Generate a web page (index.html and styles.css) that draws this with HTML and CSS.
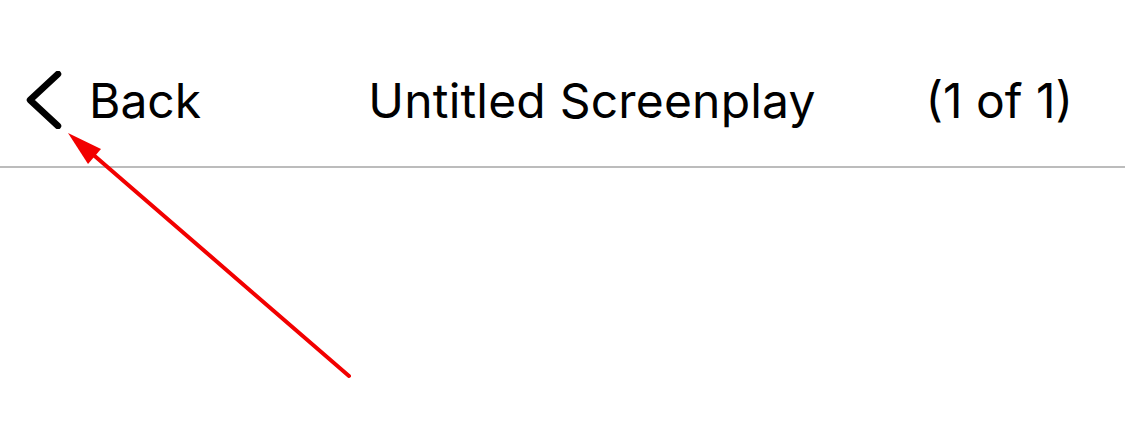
FILE: index.html
```html
<!DOCTYPE html>
<html lang="en">
<head>
    <meta charset="UTF-8">
    <title>Untitled Screenplay</title>
    <link rel="stylesheet" href="styles.css">
</head>
<body>

<div class="screen">
    <div class="nav-bar">
        <a class="back-btn" href="#">
            <svg class="chevron" width="40" height="58" viewBox="0 0 40 58">
                <path d="M33 3 L5 29 L33 55" fill="none" stroke="#000" stroke-width="6.5" stroke-linecap="round" stroke-linejoin="round"/>
            </svg>
            <span>Back</span>
        </a>
        <div class="nav-title">Untitled Screenplay</div>
        <div class="nav-count">(1 of 1)</div>
    </div>

    <!-- annotation arrow -->
    <svg class="annotation" width="1125" height="438" viewBox="0 0 1125 438">
        <line x1="349" y1="376" x2="82" y2="145" stroke="#f20000" stroke-width="4" stroke-linecap="round"/>
        <polygon points="68,133 101,149 88,164" fill="#f20000"/>
    </svg>
</div>

</body>
</html>
```

FILE: styles.css
```css
body {
    margin: 0;
    background: #fff;
    font-family: Inter, "Liberation Sans", Arial, sans-serif;
    color: #000;
}

.screen {
    position: relative;
    width: 1125px;
    height: 438px;
    overflow: hidden;
}

.nav-bar {
    display: flex;
    align-items: center;
    height: 168px;
    padding: 34px 52px 0 25px;
    border-bottom: 2px solid #bcbcbc;
    box-sizing: border-box;
    white-space: nowrap;
    font-size: 48px;
}

.back-btn {
    display: flex;
    align-items: center;
    gap: 24px;
    color: #000;
    text-decoration: none;
    width: 300px;
}

.nav-title {
    flex: 1;
    text-align: center;
    letter-spacing: 0.2px;
}

.nav-count {
    width: 214px;
    text-align: right;
}

.annotation {
    position: absolute;
    top: 0;
    left: 0;
    pointer-events: none;
}
```
